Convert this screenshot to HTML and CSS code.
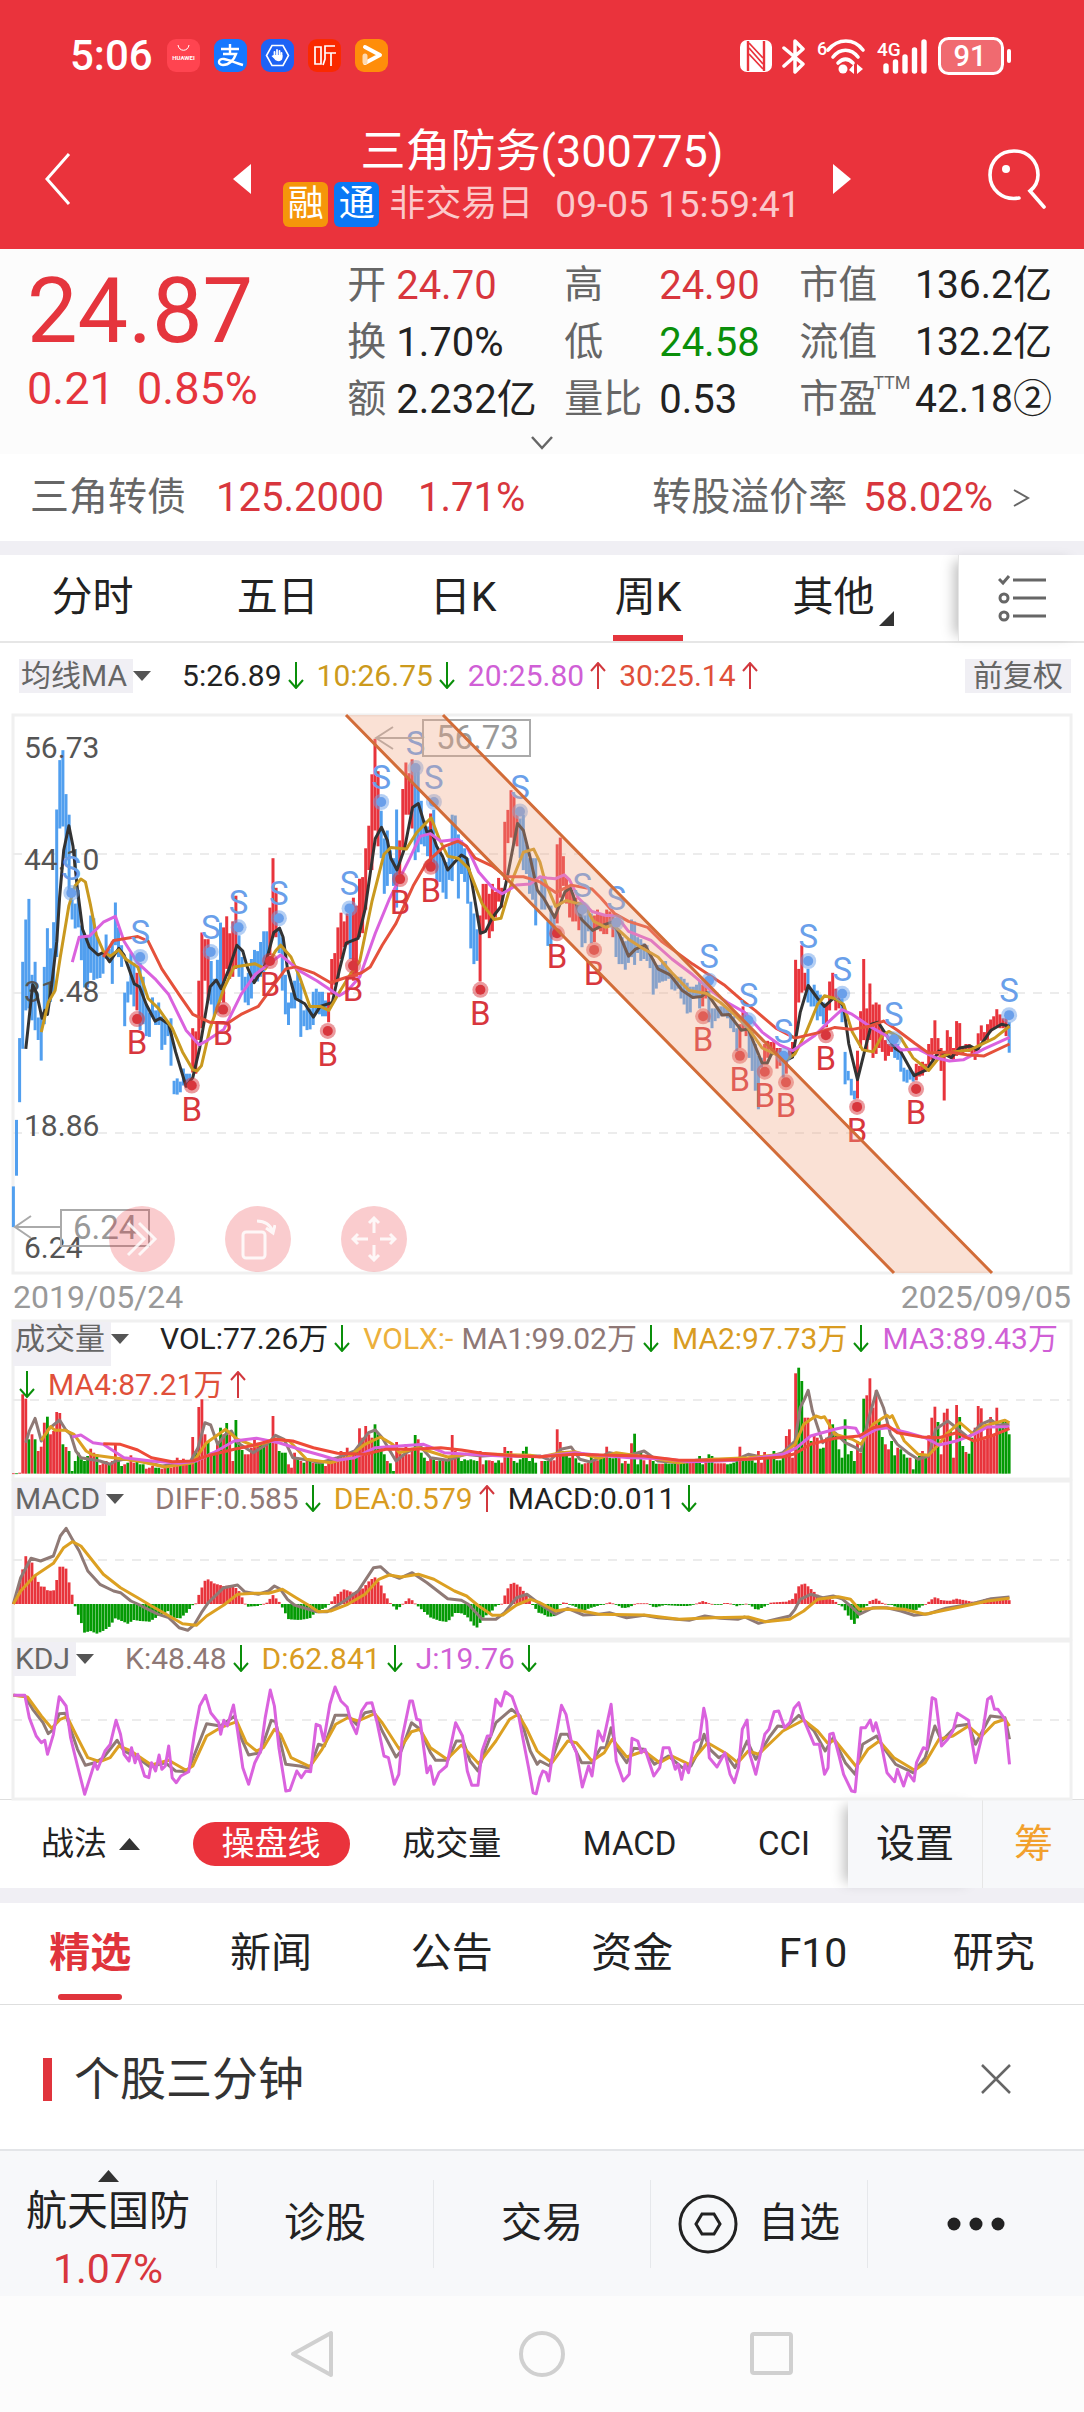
FILE: index.html
```html
<!DOCTYPE html>
<html lang="zh-CN">
<head>
    <meta charset="UTF-8">
    <meta name="viewport" content="width=device-width, initial-scale=1.0">
    <title>三角防务(300775)</title>
    <link rel="stylesheet" href="styles.css">
</head>
<body>

<!-- Arrows shared by all the indicator rows -->
<svg class="defs" aria-hidden="true">
    <symbol id="down" viewBox="0 0 16 27"><path d="M8 0V25M1 18L8 26L15 18" fill="none" stroke="#0a8f0a" stroke-width="2"/></symbol>
    <symbol id="up" viewBox="0 0 16 27"><path d="M8 27V2M1 9L8 1L15 9" fill="none" stroke="#d2383e" stroke-width="2"/></symbol>
</svg>

<header class="header">
    <div class="status-bar">
        <div class="status-left">
            <span class="clock">5:06</span>
            <svg width="33" height="33" viewBox="0 0 33 33">
                <rect width="33" height="33" rx="9" fill="#ff4450"/>
                <path d="M11 6C12 13 21 13 22 6" fill="none" stroke="#fff" stroke-width="1"/>
                <text x="16.5" y="21" text-anchor="middle" font-size="6" font-weight="700" fill="#fff">HUAWEI</text>
            </svg>
            <svg width="33" height="33" viewBox="0 0 33 33">
                <rect width="33" height="33" rx="9" fill="#1677ff"/>
                <path d="M7 10H25M16 5V15M9 15H22C20 21 15 26 9 26C3 26 4 19 10 20C16 21 22 24 29 26" fill="none" stroke="#fff" stroke-width="2.4"/>
            </svg>
            <svg width="33" height="33" viewBox="0 0 33 33">
                <rect width="33" height="33" rx="9" fill="#1d62f5"/>
                <path d="M11 6.500H22L27.500 16.500L22 26.500H11L5.500 16.500Z" fill="none" stroke="#fff" stroke-width="1.600"/>
                <path d="M13.500 18V13M16 18V11M18.500 18V12M20.500 18V14" stroke="#fff" stroke-width="1.800" stroke-linecap="round"/>
                <path d="M12.600 16H21.400V19C21.400 23 15 23 13.500 20L10.500 17Z" fill="#fff"/>
            </svg>
            <svg width="33" height="33" viewBox="0 0 33 33">
                <rect width="33" height="33" rx="9" fill="#fa2a00"/>
                <path d="M7 8H13V25H7ZM27 7H17V20L15 26M17 14H28M23 14V27" fill="none" stroke="#fff" stroke-width="1.700"/>
            </svg>
            <svg width="33" height="33" viewBox="0 0 33 33">
                <rect width="33" height="33" rx="9" fill="#ff8d0a"/>
                <path d="M10 8L25 16L10 24" fill="none" stroke="#fff" stroke-width="4" stroke-linecap="round" stroke-linejoin="round"/>
                <path d="M10 23V17" stroke="#ffd9ae" stroke-width="5" stroke-linecap="round"/>
            </svg>
        </div>
        <div class="status-right">
            <svg width="32" height="32" viewBox="0 0 32 32">
                <rect width="32" height="32" rx="7" fill="#fff"/>
                <path d="M8 1V31M24 1V31" stroke="#ea333c" stroke-width="2.400"/>
                <path d="M9 8L23 24M9 3L23 18M9 14L23 29" stroke="#ea333c" stroke-width="1.800"/>
            </svg>
            <svg width="24" height="35" viewBox="0 0 24 35">
                <path d="M2 9L21 25L13 33V2L21 10L2 27" fill="none" stroke="#fff" stroke-width="3.500" stroke-linecap="round" stroke-linejoin="round"/>
            </svg>
            <svg width="50" height="36" viewBox="0 0 50 36">
                <text x="1" y="17" font-size="18" font-weight="500" fill="#fff">6</text>
                <path d="M12 12C22 0 38 0 47 12M17 19C24 10 35 10 42 19M22 25C27 20 32 20 37 25" fill="none" stroke="#fff" stroke-width="3.600" stroke-linecap="round"/>
                <circle cx="27" cy="31" r="4.500" fill="#fff"/>
                <path d="M33 32L38 26V36ZM47 31L41 26V36Z" fill="#fff"/>
            </svg>
            <svg width="52" height="36" viewBox="0 0 52 36">
                <text x="1" y="18" font-size="19" font-weight="500" fill="#fff">4G</text>
                <path d="M10 28V33M19.500 24V33M29 19V33M38.500 12V33M48 4V33" stroke="#fff" stroke-width="5.400" stroke-linecap="round"/>
            </svg>
            <svg width="74" height="38" viewBox="0 0 74 38">
                <rect x="1.500" y="1.500" width="63" height="35" rx="9" fill="#f06a70" stroke="#fff" stroke-width="3"/>
                <path d="M71 14V24" stroke="#fff" stroke-width="4" stroke-linecap="round"/>
                <text x="32" y="29" text-anchor="middle" font-size="29" font-weight="500" fill="#fff">91</text>
            </svg>
        </div>
    </div>
    <div class="title-bar">
        <button class="icon-button back" aria-label="返回">
            <svg width="28" height="54" viewBox="0 0 28 54"><path d="M25 2L3 27L25 52" fill="none" stroke="#fff" stroke-width="3"/></svg>
        </button>
        <div class="stock">
            <button class="icon-button" aria-label="上一只">
                <svg width="18" height="30" viewBox="0 0 18 30"><path d="M18 0V30L0 15Z" fill="#fff"/></svg>
            </button>
            <div class="stock-name">
                <h1>三角防务(300775)</h1>
                <p><span class="badge badge-orange">融</span><span class="badge badge-blue">通</span>非交易日 <time>09-05 15:59:41</time></p>
            </div>
            <button class="icon-button" aria-label="下一只">
                <svg width="18" height="30" viewBox="0 0 18 30"><path d="M0 0V30L18 15Z" fill="#fff"/></svg>
            </button>
        </div>
        <button class="icon-button search" aria-label="搜索">
            <svg width="58" height="60" viewBox="0 0 58 60">
                <path d="M31 49C14 52 2 40 2 26C2 12 12 2 26 2C40 2 50 12 50 26C50 32 47 38 42 42L56 58" fill="none" stroke="#fff" stroke-width="3.600" stroke-linecap="round"/>
                <circle cx="18" cy="20" r="4" fill="#fff"/>
            </svg>
        </button>
    </div>
</header>

<section class="quote">
    <div class="quote-main">
        <div class="price">
            <strong>24.87</strong>
            <span>0.21&nbsp; 0.85%</span>
        </div>
        <dl class="figures">
            <dt>开</dt><dd class="red">24.70</dd>
            <dt>高</dt><dd class="red">24.90</dd>
            <dt>市值</dt><dd class="end">136.2亿</dd>
            <dt>换</dt><dd>1.70%</dd>
            <dt>低</dt><dd class="green">24.58</dd>
            <dt>流值</dt><dd class="end">132.2亿</dd>
            <dt>额</dt><dd>2.232亿</dd>
            <dt>量比</dt><dd>0.53</dd>
            <dt>市盈<sup>TTM</sup></dt><dd class="end">42.18②</dd>
        </dl>
    </div>
    <button class="icon-button expand" aria-label="展开">
        <svg width="22" height="14" viewBox="0 0 22 14"><path d="M1 1L11 12L21 1" fill="none" stroke="#666" stroke-width="2.500"/></svg>
    </button>
</section>

<a class="bond" href="#">
    <span class="bond-name">三角转债</span>
    <span class="bond-price red">125.2000</span>
    <span class="red">1.71%</span>
    <span class="bond-premium">转股溢价率</span>
    <span class="bond-rate red">58.02%</span>
    <svg width="17" height="18" viewBox="0 0 17 18"><path d="M1 1L15 9L1 17" fill="none" stroke="#666" stroke-width="2"/></svg>
</a>

<nav class="period">
    <div class="period-tabs">
        <button>分时</button>
        <button>五日</button>
        <button>日K</button>
        <button class="active">周K</button>
        <button class="more">其他<svg width="15" height="15" viewBox="0 0 15 15"><path d="M15 0V15H0Z" fill="#333"/></svg></button>
    </div>
    <button class="period-list" aria-label="指标列表">
        <svg width="48" height="48" viewBox="0 0 48 48" fill="none" stroke="#666" stroke-width="3">
            <path d="M1 5L5 9L11 2M15 6H48M15 24H48M15 42H48"/>
            <circle cx="6" cy="24" r="4"/><circle cx="6" cy="42" r="4"/>
        </svg>
    </button>
</nav>

<main class="charts">
    <div class="ma-row readout">
        <button class="label">均线MA</button><i class="caret"></i>
        <span class="first dark">5:26.89</span><svg class="arrow"><use href="#down"/></svg>
        <span class="gold">10:26.75</span><svg class="arrow"><use href="#down"/></svg>
        <span class="pink">20:25.80</span><svg class="arrow"><use href="#up"/></svg>
        <span class="orange">30:25.14</span><svg class="arrow"><use href="#up"/></svg>
        <button class="label adjust">前复权</button>
    </div>

    <div class="panel">
        <svg class="plot" id="price" viewBox="0 0 1058 558">
            <rect class="frame" width="1058" height="558"/>
            <path class="grid" d="M0 139H1058M0 278H1058M0 418H1058"/>
            <g id="candles"></g>
            <g class="axis">
                <text x="11" y="43">56.73</text>
                <text x="11" y="155">44.10</text>
                <text x="11" y="287">31.48</text>
                <text x="11" y="421">18.86</text>
                <text x="11" y="543">6.24</text>
            </g>
            <g id="averages"></g>
            <g id="marks"></g>
            <g class="callout">
                <rect x="410" y="5" width="107" height="36"/><path d="M410 23H363M380 12L363 23L380 34"/>
                <text x="423" y="34">56.73</text>
                <rect x="48" y="495" width="88" height="36"/><path d="M48 512H2M18 501L2 512L18 523"/>
                <text x="60" y="524">6.24</text>
            </g>
            <path d="M333 0L881 558H979L430 0Z" fill="rgba(241,169,135,0.35)"/>
            <path d="M333 0L881 558M430 0L979 558" stroke="#d26c38" stroke-width="3"/>
        </svg>
        <div class="tools">
            <button aria-label="前进"><svg width="32" height="36" viewBox="0 0 32 36"><path d="M2 2L18 18L2 34M13 2L29 18L13 34"/></svg></button>
            <button aria-label="旋转"><svg width="36" height="42" viewBox="0 0 36 42"><rect x="3" y="14" width="22" height="26" rx="3"/><path d="M17 3Q29 3 33 14M26 10L33 15L35 7"/></svg></button>
            <button aria-label="移动"><svg width="46" height="46" viewBox="0 0 46 46"><path d="M23 17V2M18 7L23 2L28 7M23 29V44M18 39L23 44L28 39M17 23H2M7 18L2 23L7 28M29 23H44M39 18L44 23L39 28"/></svg></button>
        </div>
    </div>
    <div class="dates"><time>2019/05/24</time><time>2025/09/05</time></div>

    <div class="panel">
        <div class="readout over">
            <button class="label tall">成交量</button><i class="caret"></i>
            <span class="first dark">VOL:77.26万</span><svg class="arrow"><use href="#down"/></svg>
            <span class="amber">VOLX:-</span>
            <span class="brown next">MA1:99.02万</span><svg class="arrow"><use href="#down"/></svg>
            <span class="gold2">MA2:97.73万</span><svg class="arrow"><use href="#down"/></svg>
            <span class="pink">MA3:89.43万</span><svg class="arrow"><use href="#down"/></svg>
            <span class="orange">MA4:87.21万</span><svg class="arrow"><use href="#up"/></svg>
        </div>
        <svg class="plot" viewBox="0 0 1058 160">
            <rect class="frame" width="1058" height="158"/>
            <path class="grid" d="M0 79H1058"/>
            <g id="volume"></g>
        </svg>
    </div>

    <div class="panel">
        <div class="readout over">
            <button class="label">MACD</button><i class="caret"></i>
            <span class="first brown">DIFF:0.585</span><svg class="arrow"><use href="#down"/></svg>
            <span class="gold2">DEA:0.579</span><svg class="arrow"><use href="#up"/></svg>
            <span class="dark">MACD:0.011</span><svg class="arrow"><use href="#down"/></svg>
        </div>
        <svg class="plot" viewBox="0 0 1058 160">
            <rect class="frame" width="1058" height="158"/>
            <path class="grid" d="M0 79H1058"/>
            <g id="macd"></g>
        </svg>
    </div>

    <div class="panel">
        <div class="readout over">
            <button class="label">KDJ</button><i class="caret"></i>
            <span class="first brown">K:48.48</span><svg class="arrow"><use href="#down"/></svg>
            <span class="gold2">D:62.841</span><svg class="arrow"><use href="#down"/></svg>
            <span class="pink">J:19.76</span><svg class="arrow"><use href="#down"/></svg>
        </div>
        <svg class="plot" viewBox="0 0 1058 158">
            <rect class="frame" width="1058" height="158"/>
            <path class="grid" d="M0 79H1058"/>
            <g id="kdj"></g>
        </svg>
    </div>
</main>

<div class="indicators">
    <div class="indicator-tabs">
        <button>战法<svg width="21" height="12" viewBox="0 0 21 12"><path d="M0 12L10.500 0L21 12Z" fill="#333"/></svg></button>
        <button class="pill">操盘线</button>
        <button>成交量</button>
        <button>MACD</button>
        <button>CCI</button>
    </div>
    <button class="settings">设置</button>
    <button class="chips">筹</button>
</div>

<nav class="news-tabs">
    <button class="active">精选</button>
    <button>新闻</button>
    <button>公告</button>
    <button>资金</button>
    <button>F10</button>
    <button>研究</button>
</nav>

<section class="brief">
    <h2>个股三分钟</h2>
    <button class="icon-button" aria-label="关闭">
        <svg width="32" height="32" viewBox="0 0 32 32"><path d="M2 2L30 30M30 2L2 30" stroke="#666" stroke-width="2.500"/></svg>
    </button>
</section>

<footer>
    <div class="actions">
        <button class="sector">
            <svg width="21" height="12" viewBox="0 0 21 12"><path d="M0 12L10.500 0L21 12Z" fill="#333"/></svg>
            <span>航天国防</span>
            <span class="red">1.07%</span>
        </button>
        <button>诊股</button>
        <button>交易</button>
        <button class="watch">
            <svg width="60" height="60" viewBox="0 0 60 60" fill="none" stroke="#222" stroke-width="3">
                <circle cx="30" cy="30" r="28"/><path d="M24 20H36L42 30L36 40H24L18 30Z"/>
            </svg>自选
        </button>
        <button aria-label="更多">
            <svg width="58" height="14" viewBox="0 0 58 14" fill="#222"><circle cx="7" cy="7" r="6.500"/><circle cx="29" cy="7" r="6.500"/><circle cx="51" cy="7" r="6.500"/></svg>
        </button>
    </div>
    <div class="system-nav">
        <button class="icon-button" aria-label="后退"><svg width="46" height="50" viewBox="0 0 46 50"><path d="M42 4V46L4 25Z"/></svg></button>
        <button class="icon-button" aria-label="主页"><svg width="50" height="50" viewBox="0 0 50 50"><circle cx="25" cy="25" r="21"/></svg></button>
        <button class="icon-button" aria-label="最近任务"><svg width="46" height="46" viewBox="0 0 46 46"><rect x="3" y="3" width="39" height="39" rx="2"/></svg></button>
    </div>
</footer>

<script src="charts.js"></script>
</body>
</html>
```
FILE: styles.css
```css
* {
    box-sizing: border-box;
}

body {
    margin: 0;
    font-family: Roboto, "Noto Sans CJK SC", sans-serif;
    font-size: 39px;
    line-height: 1.2;
    color: #222;
    background-color: #fff;
}

h1, h2, p, dl, dd {
    margin: 0;
    font-weight: 400;
}

button {
    padding: 0;
    border: none;
    background: none;
    font: inherit;
    color: inherit;
    white-space: nowrap;
    cursor: pointer;
}

a {
    color: inherit;
    text-decoration: none;
}

svg {
    display: block;
    flex: none;
}

.defs {
    position: absolute;
    width: 0;
    height: 0;
}

.icon-button {
    display: flex;
}

/* Text colors */
.red { color: #d8363d; }
.green { color: #0a8f0a; }
.dark { color: #222; }
.gold { color: #cc9a1c; }
.gold2 { color: #d99c22; }
.amber { color: #ecb03c; }
.pink { color: #d05fd6; }
.orange { color: #e0503a; }
.brown { color: #8f7876; }

/* Header */
.header {
    background-color: #ea333c;
    color: #fff;
}

.status-bar {
    display: flex;
    justify-content: space-between;
    align-items: center;
    height: 112px;
    padding: 0 72px 0 70px;
}

.status-left,
.status-right {
    display: flex;
    align-items: center;
}

.status-left {
    gap: 14px;
}

.status-right {
    gap: 10px;
}

.clock {
    font-size: 42px;
    font-weight: 500;
}

.title-bar {
    display: grid;
    grid-template-columns: 1fr 57% 1fr;
    align-items: center;
    height: 137px;
    padding-bottom: 4px;
}

.back {
    padding-left: 44px;
}

.search {
    justify-self: end;
    padding-right: 38px;
}

.stock {
    display: flex;
    justify-content: space-between;
    align-items: center;
}

.stock-name {
    padding-bottom: 8px;
    text-align: center;
}

.stock-name h1 {
    font-size: 45px;
    line-height: 60px;
}

.stock-name p {
    display: flex;
    align-items: center;
    font-size: 36px;
    line-height: 45px;
    color: #fbc9cb;
}

.stock-name time {
    margin-left: 22px;
    font-size: 37px;
}

.badge {
    width: 45px;
    height: 45px;
    margin-right: 6px;
    border-radius: 6px;
    color: #fff;
}

.badge-orange { background-color: #f5960a; }
.badge-blue { background-color: #0a78f5; margin-right: 10px; }

/* Quote */
.quote {
    padding-top: 8px;
    background-color: #fcfcfc;
}

.quote-main {
    display: flex;
    padding-right: 32px;
}

.price {
    display: flex;
    flex-direction: column;
    width: 33%;
    padding: 3px 0 0 27px;
    color: #e5353d;
}

.price strong {
    font-size: 90px;
    font-weight: 400;
    line-height: 104px;
}

.price span {
    font-size: 45px;
    line-height: 50px;
}

.figures {
    flex: 1;
    display: grid;
    grid-template-columns: 49px 168px 95px 140px 76px 1fr;
    line-height: 57px;
}

.figures dt {
    color: #666;
    white-space: nowrap;
}

.figures dd {
    font-size: 40px;
}

.figures sup {
    position: absolute;
    margin-left: -4px;
    font-size: 18px;
    line-height: 24px;
}

.figures .end {
    font-size: 39px;
    text-align: right;
}

.expand {
    justify-content: center;
    width: 100%;
    padding: 8px 0 4px;
}

.bond {
    display: flex;
    align-items: center;
    height: 87px;
    padding: 0 54px 0 30px;
}

.bond .red {
    font-size: 40px;
}

.bond-name,
.bond-premium {
    color: #666;
}

.bond-price {
    margin: 0 34px 0 30px;
}

.bond-premium {
    margin-left: auto;
}

.bond-rate {
    margin: 0 20px 0 16px;
}

/* Period tabs */
.period {
    display: flex;
    border-top: 14px solid #f0eff4;
    border-bottom: 2px solid #e6e6e6;
}

.period-tabs {
    flex: 1;
    display: flex;
    padding-right: 32px;
    font-size: 41px;
}

.period-tabs button {
    flex: 1;
    position: relative;
    height: 86px;
}

.period-tabs .active::after {
    content: "";
    position: absolute;
    left: 50%;
    bottom: 0;
    width: 70px;
    height: 6px;
    margin-left: -35px;
    background-color: #e5353d;
}

.more svg {
    position: absolute;
    right: 32px;
    bottom: 15px;
}

.period-list {
    display: flex;
    justify-content: center;
    align-items: center;
    width: 126px;
    border-left: 1px solid #e6e6e6;
    box-shadow: -10px 0 12px -6px rgba(0, 0, 0, 0.25);
}

/* Charts */
.charts {
    padding: 0 13px;
    border-bottom: 1px solid #dedede;
}

.readout {
    display: flex;
    flex-wrap: wrap;
    row-gap: 12px;
    font-size: 30px;
    line-height: 34px;
}

.readout span {
    margin-left: 13px;
}

.readout .first {
    margin-left: 31px;
}

.readout .next {
    margin-left: 8px;
}

.label {
    height: 34px;
    padding: 0 6px 0 2px;
    background-color: #f0eff4;
    color: #666;
}

.tall {
    height: 44px;
    margin-bottom: -10px;
    padding-bottom: 10px;
}

.caret {
    height: 10px;
    margin-top: 12px;
    border: 9px solid transparent;
    border-top: 10px solid #555;
    border-bottom: none;
}

.arrow {
    width: 16px;
    height: 27px;
    margin: 3px 0 0 6px;
}

.ma-row {
    padding: 16px 0 22px 6px;
}

.adjust {
    margin-left: auto;
    padding: 0 8px;
}

.panel {
    position: relative;
}

.over {
    position: absolute;
    top: 1px;
    left: 0;
    right: 0;
}

.plot {
    width: 100%;
    height: auto;
    overflow: visible;
    fill: none;
}

.frame {
    stroke: #f0f0f0;
    stroke-width: 3;
}

.grid {
    stroke: #ececec;
    stroke-width: 2;
    stroke-dasharray: 9 8;
}

.axis {
    font-size: 30px;
    fill: #555;
}

.callout {
    font-size: 33px;
    stroke: #aaa;
    stroke-width: 2;
}

.callout text {
    fill: #999;
    stroke: none;
}

.buy { fill: #d8363d; }
.sell { fill: #6a9fea; }

.marks-text {
    font-size: 33px;
    text-anchor: middle;
}

.tools {
    position: absolute;
    left: 96px;
    bottom: 1px;
    display: flex;
    gap: 50px;
}

.tools button {
    display: flex;
    justify-content: center;
    align-items: center;
    width: 66px;
    height: 66px;
    border-radius: 50%;
    background-color: rgba(234, 51, 60, 0.25);
}

.tools svg {
    fill: none;
    stroke: #fff;
    stroke-width: 3;
    opacity: 0.85;
}

.dates {
    display: flex;
    justify-content: space-between;
    font-size: 32px;
    line-height: 48px;
    color: #999;
}

/* Indicator switch */
.indicators {
    display: flex;
    height: 88px;
    font-size: 33px;
}

.indicator-tabs {
    flex: 1;
    display: flex;
    justify-content: space-between;
    align-items: center;
    padding: 0 38px 0 41px;
}

.indicator-tabs button {
    display: flex;
    align-items: center;
    gap: 12px;
    line-height: 44px;
}

.indicator-tabs .pill {
    margin: 0 -29px;
    padding: 0 29px;
    border-radius: 22px;
    background-color: #ea333c;
    color: #fff;
}

.settings,
.chips {
    width: 134px;
    background-color: #f7f8fa;
    font-size: 39px;
    box-shadow: -10px 0 12px -6px rgba(0, 0, 0, 0.25);
}

.chips {
    width: 102px;
    border-left: 1px solid #e6e6e6;
    box-shadow: none;
    color: #f2a02c;
}

/* News tabs */
.news-tabs {
    display: flex;
    border-top: 15px solid #f0eff4;
    border-bottom: 1px solid #dedede;
    font-size: 41px;
}

.news-tabs button {
    flex: 1;
    position: relative;
    height: 101px;
}

.news-tabs .active {
    font-weight: 700;
    color: #e0343c;
}

.news-tabs .active::after {
    content: "";
    position: absolute;
    left: 50%;
    bottom: 4px;
    width: 64px;
    height: 6px;
    margin-left: -32px;
    border-radius: 3px;
    background-color: #e0343c;
}

.brief {
    display: flex;
    justify-content: space-between;
    align-items: center;
    height: 144px;
    padding: 4px 72px 0 43px;
}

.brief h2 {
    padding-left: 22px;
    border-left: 9px solid #e0343c;
    font-size: 46px;
    line-height: 43px;
    color: #333;
}

/* Bottom bar */
.actions {
    display: flex;
    align-items: center;
    height: 147px;
    border-top: 2px solid #e3e5e8;
    background-color: #f7f8fa;
    font-size: 41px;
}

.actions button {
    flex: 1;
    display: flex;
    justify-content: center;
    align-items: center;
    height: 88px;
    border-right: 1px solid #e6e8eb;
}

.actions button:last-child {
    border-right: none;
}

.actions .sector {
    flex-direction: column;
    padding-top: 20px;
    line-height: 58px;
}

.actions .watch {
    gap: 20px;
}

.system-nav {
    display: flex;
    justify-content: center;
    align-items: center;
    gap: 182px;
    height: 116px;
    background-color: #fcfcfc;
}

.system-nav svg {
    fill: none;
    stroke: #d0d0d0;
    stroke-width: 4;
    stroke-linejoin: round;
}
```
FILE: charts.js
```js
const BLUE = '#519fef', RED = '#e8343c', GREEN = '#049a04';
const BROWN = '#8f7a76', GOLD = '#dca022', PINK = '#da62de', ORANGE = '#ee4a38';

// Every series comes in two halves, each on its own grid
const halves = [
    { offset: -13, scale: 2.904, start: 39, step: 8.974 },
    { offset: 527, scale: 2.882, start: 5, step: 8.922 }
];

function toX(half, x) {
    return halves[half].offset + x / halves[half].scale;
}

const priceY = y => y / 2.529 - 15;

function add(id, markup) {
    document.getElementById(id).insertAdjacentHTML('beforeend', markup);
}

function bar(half, i, y1, y2, color, width) {
    const x = toX(half, halves[half].start + i * halves[half].step) - width / 2;
    return `<rect x="${x.toFixed(1)}" y="${y1.toFixed(1)}" width="${width}" height="${Math.max(y2 - y1, 0.8).toFixed(1)}" fill="${color}"/>`;
}

function line(id, left, right, color, toY, width = 3) {
    const points = [left, right].map((text, half) => text.trim().split(/\s+/).map(p => {
        const [x, y] = p.split(',').map(Number);
        return toX(half, x).toFixed(1) + ',' + toY(y).toFixed(1);
    }).join(' ')).join(' ');
    add(id, `<polyline points="${points}" fill="none" stroke="${color}" stroke-width="${width}" stroke-linejoin="round"/>`);
}

// Weekly high and low, b = down, r = up
const candles = [`
b1230-1333 b1062-1203 b855-1017 b662-882 b555-785 b503-780 b695-810 b662-835 b803-860 b790-912 b675-820 b577-795 b628-760 b562-740
b277-650 b152-325 b127-320 b238-400 b290-480 b505-555 b515-578 b480-575 b570-658 b590-727 b600-727 b545-690 b552-708 b600-705
b640-703 b640-692 b593-655 b630-660 b610-718 b512-620 b575-650 b620-675 b740-825 b712-765 b640-745 b665-775 r690-785 b665-835
b700-820 b770-850 b790-852 b752-800 b785-822 b765-822 b800-885 b810-872 b820-850 b805-925 b963-997 b957-998 b965-992 b932-975
b945-980 b945-975 r830-942 r838-945 r710-860 r588-830 r605-710 r605-760 b660-770 b705-800 b657-790 b563-760 r575-765 r547-680
r590-705 r560-700 r495-680 b595-700 b650-735 b700-765 b690-772 b655-755 b632-715 b635-712 b612-700 b585-690 b585-670 r525-645
r400-600 r475-600 b575-640 b600-735 b695-795 b765-822 b740-780 b710-780 b685-760 b715-852 b785-825 b780-835 b780-833 b738-822
b730-790 b738-795 b738-800 b760-800 r740-815 r655-745 r640-720 r575-705 r538-655 r560-625 r540-620 b530-655 r500-710 r520-700
r452-600 r448-590 r375-530 r318-430 r188-430 r98-330 r180-370 b280-400 b350-490 b330-470 b380-440 b400-470 b277-525 r355-440
r225-380 r158-290 r185-290 r150-325 b165-405 b180-385 b255-365 b305-370 b320-395 r287-420 b278-420 b370-460 b380-460 b400-487
b410-503 b370-455 b290-458 b292-395 b340-502 b355-440 b375-460 b400-515 b510-628 b540-668 b580-660 r545-712 r465-590 r465-555
r490-602 r465-585 r485-550 r450-510 r475-525 r308-455 r278-362 r228-348 r240-365 r290-370 b300-400 b290-430 b365-440 b400-490
b400-505 b400-570`, `
b450-530 b455-530 b560-622 b520-625 b540-600 r365-565 r348-500 r395-470 r450-515 r480-550 r490-560 r500-560 r510-582 b530-625
b545-615 b535-585 b540-615 r545-612 r530-580 r540-585 r545-592 r530-592 r535-570 r540-600 b560-650 b590-668 b600-668 b610-682
b605-665 b555-650 b560-670 b600-640 b605-660 b615-655 b620-660 b640-678 b655-745 b670-730 b670-715 b665-712 b660-710 b680-705
b690-732 b700-735 b700-730 b700-755 b705-770 b715-793 b725-790 b725-755 b720-750 b710-780 r720-775 r720-755 b735-815 b780-830
b780-812 b775-805 b775-800 b775-800 b780-805 b790-830 b800-840 b830-888 r820-880 r775-835 r790-850 b830-905 b840-938 b870-988
b900-1035 b905-930 r870-915 r862-905 r865-900 r862-890 r880-932 r880-925 b890-955 r900-945 r880-910 r865-905 r657-850 r680-765
r620-740 r690-735 b680-765 b730-775 b720-775 b735-810 b745-800 b765-820 r770-827 r712-785 r690-755 r730-785 r745-780 b755-815
b890-972 b938-962 b958-1000 b988-1010 r887-1008 r787-880 r655-860 r780-885 r717-860 r770-905 r765-895 r770-880 r830-890 r860-912
r870-900 r870-890 b860-905 b870-910 b880-940 b930-965 b935-968 b930-960 b940-965 r920-962 r925-952 r915-950 r920-940 r870-925
r855-910 r810-890 r855-900 r880-938 r890-1013 r835-900 r852-905 r880-910 r812-900 r817-890 r875-895 r870-890 r870-890 r875-895
r880-910 r843-885 r823-862 r840-865 r820-860 r808-840 r800-830 r782-825 r795-830 r805-830 r805-850 b815-892`];

candles.forEach((text, half) => {
    add('candles', text.trim().split(/\s+/).map((c, i) => {
        const [top, bottom] = c.slice(1).split('-').map(Number);
        return bar(half, i, priceY(top), priceY(bottom), c[0] === 'b' ? BLUE : RED, 3);
    }).join(''));
});

// Moving averages 5, 10, 20, 30
line('averages', `75,882 95,720 106,740 122,805 130,785 138,795 150,720 165,610 173,500 185,380 200,318 212,370 225,480 240,580 260,625
285,645 300,638 318,662 345,628 360,645 390,718 405,725 425,770 450,812 465,805 490,820 510,890 540,977 560,955 580,880 610,725
628,708 642,730 665,680 688,620 705,635 718,675 738,715 770,670 795,588 812,577 822,600 835,680 858,755 885,768 910,802 930,775
965,765 985,685 1005,615 1040,603 1060,530 1090,350 1108,322 1125,355 1135,400 1153,430 1175,375 1198,272 1215,262 1240,335
1252,330 1268,370 1285,395 1300,430 1318,412 1340,392 1355,400 1370,460 1395,590 1410,585 1430,550 1455,522 1475,440 1503,312
1520,330 1540,400 1560,480`, `0,490 10,500 42,550 72,485 88,475 120,555 152,583 180,570 207,562 225,585 255,648 275,630 303,620
340,680 375,695 410,735 440,752 465,750 480,740 525,797 545,795 580,835 600,832 640,918 655,918 670,890 705,912 728,903 750,790
773,722 800,755 820,775 845,755 862,760 875,775 890,870 915,960 935,890 955,820 975,815 1000,850 1025,882 1040,890 1078,950
1115,935 1150,888 1185,905 1210,880 1240,875 1260,885 1300,835 1330,820 1353,825`, '#333', priceY);
line('averages', `120,840 140,765 160,735 175,650 200,520 218,470 235,453 248,460 262,515 280,595 300,635 320,648 345,632 365,655
400,675 430,755 460,780 500,830 530,890 560,935 572,938 585,925 610,830 650,730 680,675 740,667 770,680 800,635 815,620 845,650
870,700 900,775 930,775 955,785 985,740 1020,690 1045,660 1080,510 1115,390 1135,373 1180,377 1210,335 1252,298 1275,350
1300,395 1330,400 1360,425 1400,515 1435,555 1455,552 1490,450 1520,385 1550,377`, `0,410 15,460 45,522 75,507 110,515 125,515
155,560 190,575 210,568 255,605 290,625 340,650 380,690 430,735 480,742 520,765 560,795 600,830 640,880 690,900 705,912 735,895
765,845 800,770 820,748 850,755 875,770 900,840 930,885 960,890 985,850 1005,838 1040,855 1075,905 1120,937 1150,905 1190,890
1240,885 1280,868 1310,855 1353,825`, '#c9991f', priceY);
line('averages', `210,663 230,600 260,597 300,562 335,547 360,610 400,665 450,705 490,745 540,835 578,872 600,862 650,833 700,745
740,695 815,645 870,685 920,710 985,748 1010,735 1045,700 1090,590 1130,505 1190,400 1220,345 1250,338 1280,357 1330,352
1355,370 1390,435 1430,475 1458,490 1500,468 1540,465`, `0,447 20,450 45,452 70,442 85,455 110,500 150,535 190,545 220,545
255,585 320,608 380,655 440,695 500,740 540,765 590,790 640,840 690,872 728,887 790,850 830,815 870,783 900,795 950,825
1000,850 1040,885 1090,883 1140,905 1180,913 1220,910 1280,882 1353,853`, PINK, priceY);
line('averages', `300,650 330,608 400,598 430,610 470,680 520,745 560,795 610,815 660,818 700,795 750,775 800,715 830,680 860,675
910,690 960,715 1000,703 1050,690 1075,675 1110,620 1150,565 1200,470 1240,410 1290,370 1330,357 1355,370 1380,400 1430,420
1470,447 1520,447`, `0,460 45,487 90,468 150,478 175,500 215,540 255,560 310,575 350,610 440,668 530,720 580,758 620,785 680,830
735,855 800,842 850,828 900,833 950,825 990,812 1030,835 1080,868 1120,893 1180,890 1230,897 1280,900 1353,870`, '#e5513b', priceY);

// Buy and sell points: half, x, y of the dot
const sells = [[0, 207, 488], [0, 407, 650], [0, 612, 637], [0, 693, 575], [0, 810, 552], [0, 1015, 527], [0, 1107, 258],
    [0, 1207, 172], [0, 1260, 258], [0, 1510, 282], [1, 122, 530], [1, 220, 563], [1, 487, 710], [1, 601, 810], [1, 702, 900],
    [1, 773, 660], [1, 871, 743], [1, 1020, 858], [1, 1352, 797]];
const buys = [[0, 398, 807], [0, 557, 975], [0, 648, 783], [0, 784, 660], [0, 952, 837], [0, 1025, 672], [0, 1162, 453],
    [0, 1251, 422], [0, 1395, 733], [1, 49, 590], [1, 156, 632], [1, 470, 800], [1, 576, 900], [1, 648, 940], [1, 709, 967],
    [1, 824, 848], [1, 914, 1029], [1, 1084, 984]];

function mark(half, x, y, letter, name, shift) {
    const cx = toX(half, x).toFixed(1), cy = priceY(y);
    return `<g class="${name} marks-text"><circle cx="${cx}" cy="${cy}" r="8" opacity="0.5"/>
        <circle cx="${cx}" cy="${cy}" r="5"/><text x="${cx}" y="${cy + shift}">${letter}</text></g>`;
}

add('marks', sells.map(([h, x, y]) => mark(h, x, y, 'S', 'sell', -13)).join(''));
add('marks', buys.map(([h, x, y]) => mark(h, x, y, 'B', 'buy', 35)).join(''));

// Volume, y of the bar top
const volumes = [`
r517 g517 r515 r280 r293 g415 r400 g415 r450 r437 r365 g347 r400 r390 r333 r336 g430 r438 g450 g510 g480 g455 g475 g480 g465
r443 r455 g460 r492 r487 r480 g492 r480 r430 g480 g495 r490 g485 r463 r485 g478 g490 g490 r503 r500 r495 g500 g500 r503 r500
g498 r500 r498 r470 g480 r473 r488 g485 r408 g450 r318 r295 r400 g420 r455 g460 r420 g380 r400 g366 r400 r480 g357 g420 g447
r460 r460 r440 r415 r425 g430 g425 r425 g420 r345 r415 g450 g455 g455 r490 r500 r455 g470 r480 g485 r478 g475 r485 g487 g485
g487 r495 r485 r475 r470 r470 r450 r460 r440 g470 r455 g450 r382 r410 r375 r400 r410 g370 g400 g440 g460 r480 g487 g510 r423
r455 r460 r430 r460 r440 g402 r415 g455 g470 r480 r470 g475 r480 g478 r475 g480 g470 r402 r450 g470 g480 g475 g478 g475 g478
g480 r450 r490 g478 r478 r480 g485 g478 r485 r438 g450 r450 g480 g485 g475 g450 g437 g480 g470 g485`, `
r480 g480 g480 r478 r478 r385 r423 g450 g465 g470 r462 g472 g485 g490 r487 r485 g457 r475 r478 g460 g460 r437 g470 g472 g470
r460 g487 r480 g488 r427 g398 g490 g450 r478 g490 r470 g480 g488 r488 r488 g487 g488 g488 g488 r487 g488 g485 g485 r480 r485
g482 g465 g490 r482 g460 g465 r487 r487 r487 r487 g490 g488 g485 g475 r437 g473 g475 g475 g478 g485 r450 r485 r453 g465 r470
g450 g478 g478 g470 r405 r385 r470 r217 g200 g240 r350 r350 g420 r400 r410 g443 g440 r410 r355 g370 g400 g445 g470 g355 g460
g450 g480 r420 r455 g293 r283 r232 r320 r268 g360 g408 r430 r445 g420 g463 r440 g445 g460 g470 r470 g505 g470 g465 r450 g465
r403 r350 r317 g363 r460 r335 r323 g390 r470 r312 g348 g435 r453 g458 g410 r380 r315 r322 r415 r380 r348 r400 r320 g370 g360
g360 g400`];
const volumeY = y => y / 3 - 20;

volumes.forEach((text, half) => {
    add('volume', text.trim().split(/\s+/).map((v, i) =>
        bar(half, i, volumeY(+v.slice(1)), volumeY(518), v[0] === 'g' ? GREEN : RED, 2.8)).join(''));
});
line('volume', `75,425 85,390 102,352 120,420 140,385 173,357 190,385 205,400 220,450 235,470 260,475 290,480 320,490 335,480
360,475 400,478 430,485 470,495 510,490 550,487 575,440 595,365 612,372 632,430 655,400 672,390 690,425 735,455 775,430 800,403
825,415 850,470 900,478 930,485 980,470 1030,450 1070,395 1090,387 1110,410 1150,480 1180,455 1220,435 1250,470 1300,478
1350,460 1400,465 1450,462 1500,465`, `0,465 30,478 60,445 90,438 115,475 145,483 200,455 250,465 300,450 340,480 400,485
450,478 500,475 560,478 600,460 650,470 700,455 735,420 750,320 762,295 773,268 785,330 815,425 850,395 880,425 910,440 925,450
945,360 970,270 990,320 1010,400 1030,430 1060,455 1090,475 1120,465 1140,385 1175,360 1200,380 1235,410 1270,370 1300,357
1320,372 1353,370`, BROWN, volumeY);
line('volume', `120,418 147,377 160,388 190,388 215,400 250,450 270,462 330,470 400,480 480,498 560,485 600,425 655,385 690,415
740,435 800,415 840,420 890,475 960,485 1010,470 1060,430 1105,408 1140,430 1160,455 1215,440 1260,455 1300,468 1360,460
1440,460 1540,463`, `0,468 60,455 100,452 170,472 220,455 320,470 400,485 500,475 600,470 700,460 735,430 760,370 795,345 810,350
820,347 850,400 900,415 925,430 960,370 1000,343 1008,350 1015,344 1050,420 1090,460 1120,463 1150,430 1170,400 1210,365
1250,400 1280,375 1340,358 1353,365`, GOLD, volumeY);
line('volume', `210,408 235,402 270,425 300,430 360,470 440,480 520,487 570,480 620,455 680,420 745,412 810,425 870,445 940,465
980,478 1030,470 1090,440 1160,435 1230,430 1290,455 1360,460 1460,465`, `0,467 100,455 170,463 260,470 360,473 430,482 520,480
600,475 700,460 740,440 780,405 850,385 880,378 910,382 925,410 970,385 1000,380 1060,395 1110,410 1150,432 1200,420 1250,400
1290,378 1353,377`, PINK, volumeY);
line('volume', `300,428 350,430 400,447 440,470 500,482 560,480 600,465 680,445 740,432 800,415 850,420 910,440 980,457 1060,460
1120,445 1200,445 1280,440 1340,447 1400,457 1500,465`, `0,467 100,460 200,463 300,465 400,478 500,478 600,475 700,468 735,458
780,430 850,412 920,405 960,380 1000,372 1030,395 1100,408 1150,410 1200,395 1250,420 1300,405 1353,383`, ORANGE, volumeY);

// MACD histogram outline, sampled once per week
const macdY = y => y / 3 - 180;
const histogram = [`39,905 48,885 57,845 66,805 75,765 84,780 93,785 102,825 111,843 120,857 129,857 138,868 155,870 164,840
173,797 188,797 193,805 202,852 211,887 216,909 227,940 236,965 245,995 263,990 281,998 299,990 317,978 335,952 353,960 371,968
389,957 407,960 434,962 461,945 488,930 500,950 524,952 542,935 560,912 569,907 578,880 587,858 596,838 605,835 622,847 649,855
676,852 694,870 712,908 721,917 748,915 775,905 793,882 811,903 820,920 838,955 870,957 900,952 919,930 946,920 964,900 973,885
1000,865 1027,875 1054,862 1072,840 1088,828 1108,855 1117,880 1135,908 1153,927 1170,908 1190,890 1206,908 1224,925 1251,950
1278,960 1300,963 1323,935 1345,938 1359,950 1377,975 1386,980 1404,948 1425,935 1440,915 1458,908 1467,880 1480,850 1494,845
1512,858 1530,885 1545,910 1568,940`, `0,935 25,948 43,945 55,912 70,903 86,910 104,918 122,930 148,920 175,912 202,904 220,911
240,922 260,918 275,907 310,907 330,920 360,912 400,915 430,915 450,908 470,900 490,908 520,911 535,905 550,908 568,916 590,907
605,911 625,928 650,915 665,905 690,903 710,902 729,893 740,870 747,852 764,848 782,865 800,882 818,890 845,897 860,908 875,920
889,945 907,970 916,950 934,925 945,910 951,900 969,893 990,908 1010,910 1030,920 1050,928 1080,930 1100,915 1115,907 1129,895
1140,888 1156,897 1180,900 1200,893 1220,897 1250,903 1290,893 1343,893 1353,898`];

histogram.forEach((text, half) => {
    const points = text.trim().split(/\s+/).map(p => p.split(',').map(Number));
    const { start, step } = halves[half];
    let markup = '';
    for (let i = 0; start + i * step < points[points.length - 1][0]; i++) {
        const x = start + i * step;
        const k = points.findIndex(p => p[0] > x);
        const [a, b] = [points[k - 1], points[k]];
        const y = a[1] + (b[1] - a[1]) * (x - a[0]) / (b[0] - a[0]);
        markup += bar(half, i, macdY(Math.min(y, 909)), macdY(Math.max(y, 909)), y > 909 ? GREEN : RED, 2.8);
    }
    add('macd', markup);
});
line('macd', `39,908 60,830 90,772 118,780 155,765 175,705 192,682 210,715 230,750 255,810 290,850 330,870 350,875 380,900
400,909 430,925 460,940 490,950 520,980 545,988 565,970 585,935 605,905 650,860 690,852 710,872 750,880 780,870 797,855 815,865
835,895 855,912 920,932 950,932 1000,900 1040,870 1085,800 1105,797 1130,820 1160,832 1197,815 1240,845 1300,893 1340,898
1360,910 1400,955 1440,955 1465,935 1500,890 1530,880`, `0,910 45,940 80,922 125,942 170,940 200,935 250,950 300,943 340,950
430,958 475,945 520,952 570,955 590,948 630,967 680,955 720,945 735,925 750,895 780,880 815,890 845,885 870,893 900,920 920,940
960,920 1000,920 1040,930 1078,943 1120,938 1170,922 1240,910 1300,893 1353,888`, BROWN, macdY);
line('macd', `39,909 60,870 100,825 155,787 185,740 210,722 235,735 300,820 350,860 400,890 435,912 480,938 530,968 570,973
600,945 650,912 690,880 740,877 780,877 820,865 860,890 900,915 925,932 960,930 1010,910 1060,880 1100,835 1130,822 1165,828
1215,820 1260,835 1320,870 1355,885 1390,915 1430,943 1460,942 1500,912 1540,895`, `0,905 45,930 75,925 110,928 170,940 300,942
400,955 500,950 600,948 650,962 720,955 760,930 800,895 860,887 895,895 920,925 980,920 1050,925 1110,940 1200,920 1290,900
1353,892`, GOLD, macdY);

const kdjY = y => y / 3 - 340;
line('kdj', `39,1183 72,1185 95,1225 125,1265 140,1298 155,1285 172,1238 190,1237 205,1285 225,1345 248,1393 275,1385 300,1370
340,1318 360,1350 400,1370 435,1397 480,1385 510,1410 545,1412 565,1360 600,1268 640,1275 682,1245 700,1310 722,1362 755,1355
788,1258 800,1262 830,1390 870,1395 900,1402 925,1330 942,1335 973,1243 1010,1243 1035,1270 1060,1235 1085,1230 1110,1290
1150,1368 1165,1350 1195,1265 1220,1285 1250,1355 1265,1378 1300,1378 1325,1320 1345,1320 1365,1380 1388,1410 1410,1345
1440,1265 1485,1225 1510,1245 1540,1350 1560,1390`, `0,1380 28,1395 60,1300 80,1300 120,1385 150,1385 175,1340 190,1340
205,1280 220,1340 250,1385 270,1342 300,1345 330,1390 370,1365 410,1400 435,1395 460,1345 473,1300 490,1345 515,1370 535,1360
562,1400 597,1320 622,1375 660,1310 685,1275 710,1278 746,1243 790,1290 822,1350 845,1310 880,1385 908,1420 930,1330 970,1305
990,1340 1025,1390 1075,1415 1110,1370 1138,1275 1157,1320 1200,1275 1235,1270 1255,1330 1298,1245 1340,1250 1353,1315`, BROWN, kdjY);
line('kdj', `39,1183 80,1188 120,1245 150,1282 175,1255 195,1247 220,1300 255,1370 290,1382 320,1370 345,1335 380,1350 440,1392
490,1378 540,1408 560,1395 600,1305 640,1280 688,1262 715,1325 745,1350 765,1340 797,1285 815,1300 845,1370 900,1397 935,1345
975,1270 1010,1250 1040,1260 1088,1238 1110,1265 1160,1345 1195,1292 1220,1285 1250,1340 1298,1375 1340,1332 1390,1388
1440,1320 1480,1255 1505,1240 1530,1285 1560,1350`, `0,1358 35,1385 80,1320 105,1325 150,1380 185,1355 208,1315 250,1368
300,1350 345,1385 380,1365 430,1390 483,1325 540,1360 570,1385 600,1350 630,1360 700,1290 760,1257 800,1290 828,1325 850,1318
912,1397 945,1345 978,1320 1020,1370 1080,1408 1110,1385 1150,1315 1190,1305 1235,1275 1270,1308 1310,1265 1340,1255
1353,1275`, GOLD, kdjY);
line('kdj', `39,1183 72,1183 85,1250 105,1305 120,1325 130,1318 138,1360 155,1300 172,1187 192,1215 205,1310 225,1395 246,1480
275,1385 283,1405 305,1350 320,1330 337,1258 350,1300 360,1360 375,1380 382,1340 392,1385 400,1360 420,1425 432,1430 440,1385
452,1410 462,1362 470,1405 480,1395 490,1335 500,1430 512,1445 525,1425 548,1412 565,1295 580,1215 597,1183 612,1235 635,1265
641,1300 650,1258 660,1275 678,1212 690,1290 705,1400 722,1450 740,1385 757,1350 770,1250 785,1167 797,1215 810,1340 830,1470
842,1468 862,1410 875,1430 888,1410 902,1412 918,1270 930,1275 940,1320 958,1210 973,1158 990,1200 1008,1218 1020,1265
1035,1298 1050,1230 1065,1207 1080,1205 1095,1265 1115,1365 1128,1370 1145,1450 1158,1420 1168,1310 1190,1200 1198,1200
1210,1255 1220,1258 1240,1415 1250,1395 1260,1450 1275,1415 1297,1395 1312,1320 1323,1265 1343,1305 1357,1410 1370,1453
1388,1453 1400,1350 1415,1305 1425,1305 1440,1195 1455,1215 1467,1172 1487,1187 1505,1240 1520,1320 1535,1400 1548,1475
1557,1478`, `0,1430 8,1410 18,1415 25,1440 38,1350 62,1213 75,1240 90,1320 105,1355 122,1458 140,1395 150,1425 168,1290
182,1320 205,1210 220,1380 240,1440 257,1420 265,1312 282,1320 292,1355 303,1345 328,1425 345,1400 355,1340 372,1340 390,1405
398,1390 408,1435 418,1390 428,1415 445,1325 460,1315 472,1222 480,1260 488,1370 510,1398 533,1355 548,1420 560,1445 572,1400
583,1285 597,1257 605,1360 622,1420 648,1300 660,1285 675,1232 688,1230 705,1280 720,1265 732,1222 746,1205 760,1255 790,1330
805,1330 820,1420 830,1400 835,1300 845,1297 862,1365 875,1420 898,1470 908,1472 925,1280 938,1280 952,1257 960,1290 968,1265
980,1310 1000,1415 1022,1442 1030,1405 1048,1455 1060,1415 1078,1440 1085,1385 1105,1340 1115,1345 1130,1190 1140,1195
1157,1335 1175,1315 1190,1290 1203,1237 1235,1258 1255,1385 1275,1300 1290,1195 1300,1187 1310,1225 1320,1225 1340,1255
1353,1390`, PINK, kdjY);
```
